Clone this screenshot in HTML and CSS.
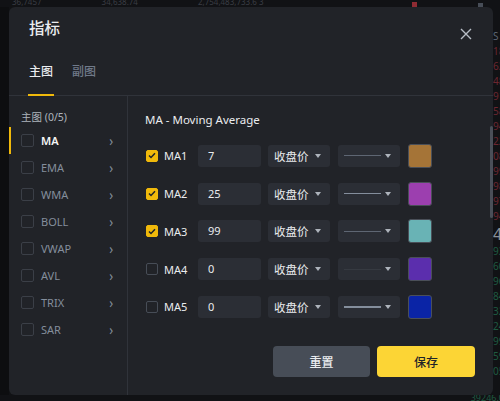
FILE: index.html
```html
<!DOCTYPE html>
<html lang="zh">
<head>
<meta charset="utf-8">
<title>指标</title>
<link rel="stylesheet" href="styles.css">
</head>
<body>
<div class="screen">
  <div class="top-strip">
    <span class="faint">36,7457</span><span class="faint">34,638.74</span><span class="faint">2,754,483,733.6 3</span>
    <span class="spacer"></span>
    <span class="sq red"></span><span class="sq grey"></span>
  </div>
  <div class="middle">
    <div class="left-strip"></div>
    <div class="modal">
      <div class="modal-head">
        <h1 class="title">指标</h1>
        <button class="close" aria-label="关闭">
          <svg width="12" height="12" viewBox="0 0 12 12"><path d="M1 1L11 11M11 1L1 11" stroke="#b7bdc6" stroke-width="1.4" fill="none"/></svg>
        </button>
      </div>
      <div class="tabs">
        <div class="tab active">主图</div>
        <div class="tab">副图</div>
      </div>
      <div class="body">
        <div class="sidebar">
          <div class="side-label">主图 (0/5)</div>
          <div class="side-item active"><span class="box"></span><span class="name">MA</span><span class="chev">›</span></div>
          <div class="side-item"><span class="box"></span><span class="name">EMA</span><span class="chev">›</span></div>
          <div class="side-item"><span class="box"></span><span class="name">WMA</span><span class="chev">›</span></div>
          <div class="side-item"><span class="box"></span><span class="name">BOLL</span><span class="chev">›</span></div>
          <div class="side-item"><span class="box"></span><span class="name">VWAP</span><span class="chev">›</span></div>
          <div class="side-item"><span class="box"></span><span class="name">AVL</span><span class="chev">›</span></div>
          <div class="side-item"><span class="box"></span><span class="name">TRIX</span><span class="chev">›</span></div>
          <div class="side-item"><span class="box"></span><span class="name">SAR</span><span class="chev">›</span></div>
        </div>
        <div class="panel">
          <div class="panel-title">MA - Moving Average</div>
          <div class="rows">
            <div class="row">
              <span class="check on"><svg width="8" height="7" viewBox="0 0 8 7"><path d="M1 3.5L3 5.5L7 1.2" stroke="#1e2329" stroke-width="1.5" fill="none"/></svg></span>
              <span class="ma">MA1</span>
              <span class="field">7</span>
              <span class="select"><span>收盘价</span><i class="caret"></i></span>
              <span class="select line-sel"><i class="line l1"></i><i class="caret"></i></span>
              <span class="swatch c1"></span>
            </div>
            <div class="row">
              <span class="check on"><svg width="8" height="7" viewBox="0 0 8 7"><path d="M1 3.5L3 5.5L7 1.2" stroke="#1e2329" stroke-width="1.5" fill="none"/></svg></span>
              <span class="ma">MA2</span>
              <span class="field">25</span>
              <span class="select"><span>收盘价</span><i class="caret"></i></span>
              <span class="select line-sel"><i class="line l2"></i><i class="caret"></i></span>
              <span class="swatch c2"></span>
            </div>
            <div class="row">
              <span class="check on"><svg width="8" height="7" viewBox="0 0 8 7"><path d="M1 3.5L3 5.5L7 1.2" stroke="#1e2329" stroke-width="1.5" fill="none"/></svg></span>
              <span class="ma">MA3</span>
              <span class="field">99</span>
              <span class="select"><span>收盘价</span><i class="caret"></i></span>
              <span class="select line-sel"><i class="line l1"></i><i class="caret"></i></span>
              <span class="swatch c3"></span>
            </div>
            <div class="row">
              <span class="check"></span>
              <span class="ma">MA4</span>
              <span class="field">0</span>
              <span class="select"><span>收盘价</span><i class="caret"></i></span>
              <span class="select line-sel"><i class="line l4"></i><i class="caret"></i></span>
              <span class="swatch c4"></span>
            </div>
            <div class="row">
              <span class="check"></span>
              <span class="ma">MA5</span>
              <span class="field">0</span>
              <span class="select"><span>收盘价</span><i class="caret"></i></span>
              <span class="select line-sel"><i class="line l2"></i><i class="caret"></i></span>
              <span class="swatch c5"></span>
            </div>
          </div>
          <div class="footer">
            <button class="btn reset">重置</button>
            <button class="btn save">保存</button>
          </div>
        </div>
      </div>
      <div class="scrollbar"></div>
    </div>
    <div class="right-strip">
      <span class="w">S</span>
      <span class="r">18</span><span class="r">62</span><span class="r">48</span><span class="r">91</span><span class="r">58</span><span class="r">94</span><span class="r">22</span><span class="r">08</span><span class="r">99</span><span class="r">98</span><span class="r">97</span><span class="r">94</span>
      <span class="big">4</span>
      <span class="g">93</span><span class="g">60</span><span class="g">96</span><span class="g">84</span><span class="g">32</span><span class="g">24</span><span class="g">99</span><span class="g">59</span><span class="g">05</span>
    </div>
  </div>
  <div class="bottom-strip"><span class="spacer"></span><span class="g2">39246.0</span></div>
</div>
</body>
</html>
```
FILE: styles.css
```css
* { box-sizing: border-box; }
html, body { margin: 0; padding: 0; }
body {
  width: 500px;
  height: 401px;
  overflow: hidden;
  background: #111215;
  font-family: "Noto Sans", "Noto Sans CJK SC", sans-serif;
  color: #eaecef;
}
.screen { display: flex; flex-direction: column; width: 500px; height: 401px; }
.top-strip {
  height: 7px;
  display: flex;
  align-items: flex-end;
  gap: 60px;
  padding-left: 12px;
  overflow: hidden;
}
.top-strip .faint { font-size: 8px; line-height: 6px; color: #3a3d44; white-space: nowrap; transform: translateY(-2px); }
.top-strip .spacer { flex: 1; }
.top-strip .sq { width: 5px; height: 5px; margin-bottom: 0; }
.top-strip .red { background: #8f2b33; margin-right: 1px; }
.top-strip .grey { background: #474d57; margin-right: 17px; height: 4px; }
.middle { display: flex; height: 388px; }
.left-strip { width: 9px; background: #0d0e10; }
.right-strip {
  width: 7px;
  overflow: hidden;
  display: flex;
  flex-direction: column;
  padding-top: 22px;
  font-size: 10px;
  line-height: 15px;
  white-space: nowrap;
}
.right-strip .w { color: #5e6673; }
.right-strip .r { color: #6b2630; }
.right-strip .g { color: #1f5a41; }
.right-strip .big { color: #8a9099; font-size: 16px; line-height: 20px; }
.bottom-strip { height: 6px; display: flex; overflow: hidden; }
.bottom-strip .spacer { flex: 1; }
.bottom-strip .g2 { color: #1f5a41; font-size: 9px; line-height: 6px; margin-right: -4px; }

.modal {
  position: relative;
  width: 484px;
  height: 388px;
  background: #212328;
  border-radius: 6px;
  display: flex;
  flex-direction: column;
  overflow: hidden;
}
.modal-head {
  height: 44px;
  display: flex;
  align-items: flex-start;
  justify-content: space-between;
  padding: 9px 20px 0 20px;
}
.title { margin: 0; font-size: 15.5px; line-height: 24px; font-weight: 500; color: #eaecef; }
.close {
  background: none; border: 0; padding: 0; margin-top: 12px; margin-right: 1px;
  width: 12px; height: 12px; display: flex;
}
.tabs {
  display: flex;
  gap: 17px;
  padding-left: 19px;
  border-bottom: 1px solid #30333a;
}
.tab {
  font-size: 12px;
  line-height: 20px;
  padding: 11px 1px 12px;
  border-bottom: 2px solid transparent;
  margin-bottom: -1px;
  color: #707a8a;
  font-weight: 500;
}
.tab.active { color: #eaecef; border-bottom-color: #f0b90b; }

.body { flex: 1; display: flex; min-height: 0; }
.sidebar {
  width: 119px;
  border-right: 1px solid #30333a;
  padding-top: 12px;
}
.side-label { font-size: 10.5px; line-height: 18px; padding-left: 12px; color: #aeb4bc; margin-bottom: 1px; }
.side-item {
  height: 27px;
  display: flex;
  align-items: center;
  padding: 0 14px 0 10px;
  border-left: 2px solid transparent;
}
.side-item.active { border-left-color: #f0b90b; }
.box { width: 13px; height: 13px; border: 1px solid #3b3f47; border-radius: 2px; }
.name { flex: 1; margin-left: 7px; font-size: 11px; color: #848e9c; }
.side-item.active .name { color: #f5f5f5; font-weight: 600; }
.chev { color: #848e9c; font-size: 14px; line-height: 14px; transform: scaleX(0.9); }

.panel { flex: 1; display: flex; flex-direction: column; padding: 15px 0 18px 17px; }
.panel-title { font-size: 11.5px; line-height: 18px; color: #eaecef; }
.rows { margin-top: 8px; display: flex; flex-direction: column; }
.row { height: 37.75px; display: flex; align-items: center; padding-left: 1px; }
.check {
  width: 12px; height: 12px; border: 1px solid #474d57; border-radius: 2px;
  display: flex; align-items: center; justify-content: center;
}
.check.on { background: #f0b90b; border-color: #f0b90b; }
.ma { width: 40px; padding-left: 6px; font-size: 11px; color: #eaecef; }
.field {
  width: 63px; height: 22px; background: #2b2e35; border-radius: 3px;
  font-size: 11px; line-height: 22px; padding-left: 10px; color: #eaecef;
}
.select {
  width: 62px; height: 22px; background: #2b2e35; border-radius: 3px;
  display: flex; align-items: center; justify-content: space-between;
  padding: 0 9px 0 6px; margin-left: 7px;
  font-size: 11.5px; color: #eaecef;
}
.line-sel { margin-left: 8px; padding-left: 6px; }
.caret {
  width: 0; height: 0;
  border-left: 3px solid transparent; border-right: 3px solid transparent;
  border-top: 4px solid #aeb4bc;
}
.line { display: block; width: 37px; height: 1px; background: #5e6673; }
.line.l2 { background: #848e9c; height: 1.5px; }
.line.l4 { background: #363a41; }
.swatch {
  width: 24px; height: 24px; margin-left: 8px; border-radius: 3px;
  border: 1px solid #4a4f58;
}
.c1 { background: #a57437; }
.c2 { background: #9c3faf; }
.c3 { background: #69b3b5; }
.c4 { background: #5b2ead; }
.c5 { background: #0a24a6; }
.footer { margin-top: auto; display: flex; justify-content: flex-end; gap: 7px; padding-right: 18px; }
.btn {
  width: 97px; height: 31px; border: 0; border-radius: 4px;
  font-family: "Noto Sans CJK SC", sans-serif; font-size: 12px; font-weight: 500;
}
.reset { background: #474d57; color: #eaecef; }
.save { background: #fcd535; color: #1e2329; width: 98px; }
.scrollbar {
  position: absolute; right: 0; top: 119px;
  width: 3px; height: 92px; border-radius: 2px; background: #4a4f58;
}
```
